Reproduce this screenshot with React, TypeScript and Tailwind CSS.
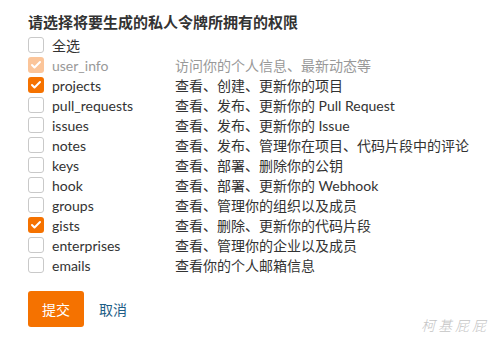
import { Check } from 'lucide-react';

const rows = [
  { name: 'user_info', desc: '访问你的个人信息、最新动态等', checked: true, disabled: true },
  { name: 'projects', desc: '查看、创建、更新你的项目', checked: true },
  { name: 'pull_requests', desc: '查看、发布、更新你的 Pull Request' },
  { name: 'issues', desc: '查看、发布、更新你的 Issue' },
  { name: 'notes', desc: '查看、发布、管理你在项目、代码片段中的评论' },
  { name: 'keys', desc: '查看、部署、删除你的公钥' },
  { name: 'hook', desc: '查看、部署、更新你的 Webhook' },
  { name: 'groups', desc: '查看、管理你的组织以及成员' },
  { name: 'gists', desc: '查看、删除、更新你的代码片段', checked: true },
  { name: 'enterprises', desc: '查看、管理你的企业以及成员' },
  { name: 'emails', desc: '查看你的个人邮箱信息' },
];

function Box({ checked, disabled }: { checked?: boolean; disabled?: boolean }) {
  if (checked) {
    return (
      <span
        className={`w-4 h-4 rounded-[3px] flex items-center justify-center shrink-0 ${
          disabled ? 'bg-[#fbc59a]' : 'bg-[#f57200]'
        }`}
      >
        <Check size={12} strokeWidth={4} className="text-white" />
      </span>
    );
  }
  return <span className="w-4 h-4 rounded-[3px] border border-[#c9c9c9] bg-white shrink-0" />;
}

export default function App() {
  return (
    <div
      className="relative w-[498px] h-[343px] bg-white px-7 pt-[12px] text-[14px] text-[#333]"
      style={{ fontFamily: 'Lato, "Noto Sans CJK SC", sans-serif' }}
    >
      <h1 className="text-[15px] font-bold leading-5 text-[#333]">请选择将要生成的私人令牌所拥有的权限</h1>
      <div className="mt-[3px] flex flex-col">
        <label className="h-5 flex items-center">
          <Box />
          <span className="ml-2">全选</span>
        </label>
        {rows.map((r) => (
          <label key={r.name} className={`h-5 flex items-center ${r.disabled ? 'text-[#999]' : ''}`}>
            <Box checked={r.checked} disabled={r.disabled} />
            <span className="ml-2 w-[123px]">{r.name}</span>
            <span>{r.desc}</span>
          </label>
        ))}
      </div>
      <div className="mt-[16px] flex items-center">
        <button className="w-14 h-9 rounded-[3px] bg-[#f57200] text-white text-[14px]">提交</button>
        <a className="ml-[15px] text-[#1d5e86]">取消</a>
      </div>
      <span
        className="absolute right-[9px] bottom-[7px] text-[14px] italic font-light text-[#c4c4c4] tracking-[3px]"
        style={{ fontFamily: '"Noto Sans CJK SC", serif' }}
      >
        柯基屁屁
      </span>
    </div>
  );
}
